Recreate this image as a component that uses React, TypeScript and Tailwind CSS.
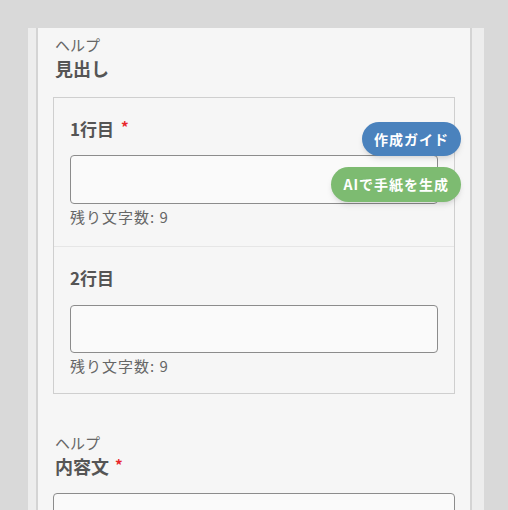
import React from 'react';

const font = { fontFamily: '"Noto Sans CJK JP", "Noto Sans", sans-serif' };

const Row: React.FC<{ label: string; required?: boolean; last?: boolean }> = ({ label, required, last }) => {
    return (
        <div className={`px-4 pt-[18px] ${last ? 'pb-[17px]' : 'pb-[19px] border-b border-[#e6e6e6]'}`}>
            <div className="flex items-center gap-[7px] h-[26px] text-[17px] font-bold text-[#555]">
                {label}
                {required && <span className="text-[#e8262b] text-[15px] -mt-[3px]">*</span>}
            </div>
            <div className={`${last ? 'mt-[14px] h-[48px]' : 'mt-[13px] h-[49px]'} rounded-[4px] border border-[#8c8c8c] bg-[#fafafa]`} />
            <div className="mt-[3px] text-[15px] leading-[20px] tracking-[1px] text-[#666]">残り文字数: 9</div>
        </div>
    );
};

export default function App() {
    return (
        <div className="w-[508px] h-[510px] overflow-hidden bg-[#d9d9d9] pt-[28px] pl-[28px]" style={font}>
            <div className="w-[456px] h-[482px] bg-[#ededed] pl-[8px] pr-[12px]">
                <div className="h-full bg-[#f6f6f6] border-x-2 border-[#d4d4d4] px-[15px] pt-[7px]">
                    <div className="pl-[2px] text-[15px] leading-[20px] text-[#666]">ヘルプ</div>
                    <div className="pl-[2px] text-[18px] leading-[26px] font-bold text-[#555]">見出し</div>

                    <div className="relative mt-[16px] border border-[#cfcfcf]">
                        <Row label="1行目" required />
                        <Row label="2行目" last />

                        <div className="absolute top-[24px] right-[-7px] flex flex-col items-end gap-[11px]">
                            <button className="h-[34px] px-[12px] rounded-full bg-[#4a82bd] text-white text-[14px] font-bold tracking-[1px] shadow-md">
                                作成ガイド
                            </button>
                            <button className="h-[35px] px-[12px] rounded-full bg-[#7dbb71] text-white text-[14px] font-bold tracking-[1px] shadow-md">
                                AIで手紙を生成
                            </button>
                        </div>
                    </div>

                    <div className="mt-[39px] pl-[2px] text-[15px] leading-[20px] text-[#666]">ヘルプ</div>
                    <div className="flex items-center gap-[6px] pl-[2px] text-[18px] leading-[26px] font-bold text-[#555]">
                        内容文
                        <span className="text-[#e8262b] text-[15px] -mt-[3px]">*</span>
                    </div>
                    <div className="mt-[14px] h-[60px] rounded-[4px] border border-[#8c8c8c] bg-[#fafafa]" />
                </div>
            </div>
        </div>
    );
}
